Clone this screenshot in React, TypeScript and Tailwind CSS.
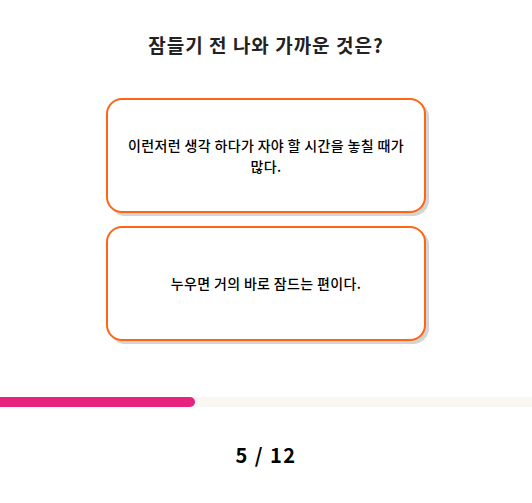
export default function App() {
  const current = 5;
  const total = 12;
  const options = [
    "이런저런 생각 하다가 자야 할 시간을 놓칠 때가 많다.",
    "누우면 거의 바로 잠드는 편이다.",
  ];

  return (
    <div
      className="w-[532px] h-[503px] bg-white flex flex-col items-center"
      style={{ fontFamily: '"Noto Sans CJK KR", "Noto Sans", sans-serif' }}
    >
      {/* question */}
      <h1 className="mt-[32px] h-[26px] leading-[26px] text-[19px] tracking-[1px] font-bold text-[#222]">
        잠들기 전 나와 가까운 것은?
      </h1>

      {/* options */}
      <div className="mt-[40px] flex flex-col gap-[13px]">
        {options.map((opt) => (
          <button
            key={opt}
            className="w-[320px] h-[115px] px-[18px] flex items-center justify-center text-center bg-white border-2 border-[#ff6514] rounded-[16px] shadow-[3px_3px_0_#d4d4d4] text-[14px] tracking-[0.35px] leading-[21px] font-medium text-black"
          >
            {opt}
          </button>
        ))}
      </div>

      {/* progress */}
      <div className="mt-[56px] w-full h-[10px] bg-[#faf6f2]">
        <div
          className="h-full bg-[#e8237e] rounded-r-full"
          style={{ width: `${(195 / 532) * 100}%` }}
        />
      </div>

      <div className="mt-[34px] text-[20px] leading-[28px] tracking-[1.5px] font-bold text-black">
        {current} / {total}
      </div>
    </div>
  );
}
